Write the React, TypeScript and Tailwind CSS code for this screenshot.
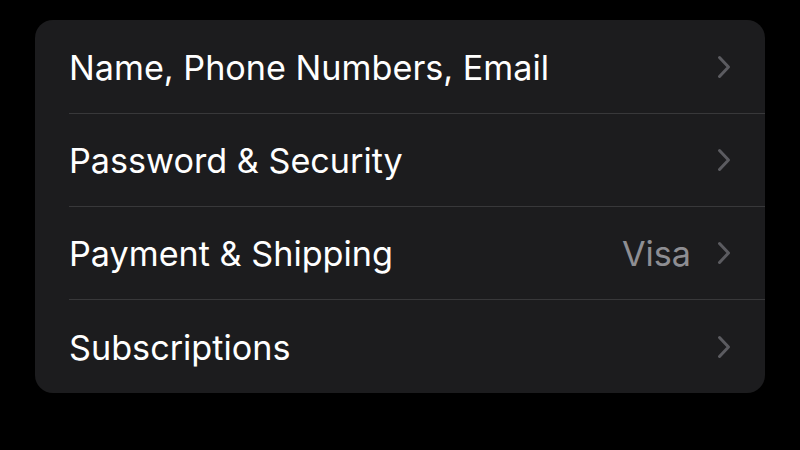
import React from "react";

const rows = [
  { label: "Name, Phone Numbers, Email" },
  { label: "Password & Security" },
  { label: "Payment & Shipping", value: "Visa" },
  { label: "Subscriptions" },
];

function Chevron() {
  return (
    <svg width="14" height="24" viewBox="0 0 14 24" fill="none" className="shrink-0">
      <path d="M2.5 2.5 L11.5 12 L2.5 21.5" stroke="#5b5b60" strokeWidth="3" strokeLinecap="round" strokeLinejoin="round" />
    </svg>
  );
}

export default function App() {
  return (
    <div className="w-[800px] h-[450px] bg-black pt-5 pl-[35px] pr-[35px]" style={{ fontFamily: "Inter, 'Noto Sans', sans-serif" }}>
      <div className="bg-[#1c1c1e] rounded-[18px] overflow-hidden">
        {rows.map((r, i) => (
          <div key={r.label} className="pl-[34px]">
            <div
              className={`flex items-center pr-[34px] ${i > 0 ? "border-t border-[#38383a]" : ""} ${
                i === rows.length - 1 ? "h-[94px]" : "h-[93px]"
              }`}
            >
              <span className="flex-1 text-[34.2px] text-white pt-[2px]">{r.label}</span>
              {r.value && <span className="text-[34.2px] text-[#8e8e93] mr-[26px] pt-[2px]">{r.value}</span>}
              <Chevron />
            </div>
          </div>
        ))}
      </div>
    </div>
  );
}
